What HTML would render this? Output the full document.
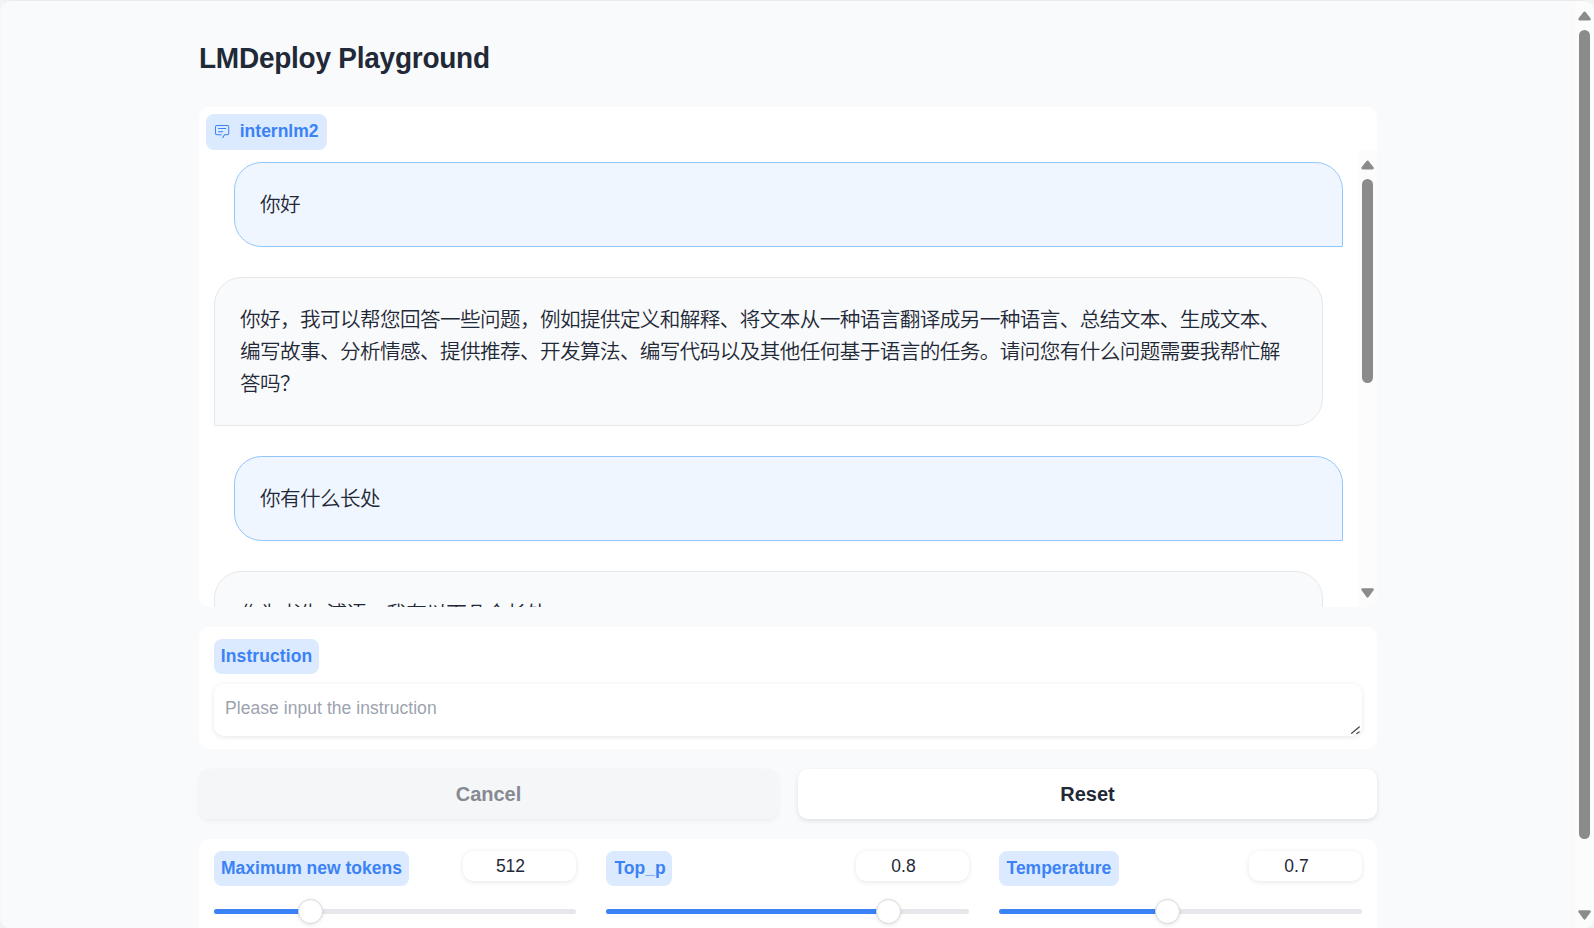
<!DOCTYPE html>
<html lang="zh">
<head>
<meta charset="utf-8">
<title>LMDeploy Playground</title>
<style>
*{box-sizing:border-box;margin:0;padding:0}
html,body{width:1594px;height:928px;overflow:hidden;background:#f3f3f3}
body{font-family:"Liberation Sans","Noto Sans CJK SC",sans-serif;color:#1f2937;position:relative}
#frame{position:absolute;left:0;top:0;width:1594px;height:928px;background:#f9fafb;border-radius:10px;overflow:hidden}
#frame::after{content:"";position:absolute;left:0;top:0;right:0;bottom:0;border-radius:10px;border-top:1px solid #ebebeb;border-left:1px solid #f6f7f8;pointer-events:none}
h1{position:absolute;left:199px;top:41px;font-size:28px;line-height:36px;letter-spacing:-0.25px;transform:scaleY(1.045);transform-origin:0 28px;font-weight:700;color:#1f2937;white-space:nowrap}
.panel{position:absolute;background:#fff;border-radius:10px}
.pill{position:absolute;display:flex;align-items:center;background:#dbeafe;color:#3b82f6;font-weight:700;font-size:17.5px;line-height:24.5px;border-radius:8px;white-space:nowrap;padding:0 7.5px;height:35px}
.pill svg{width:16.25px;height:16.25px;margin-right:10px;flex:none}
.bubble{position:absolute;font-weight:350;font-size:20.6px;letter-spacing:-0.6px;line-height:32px;color:#1f2937;border:1px solid #e5e7eb;background:#f9fafb;border-radius:27.5px;padding:26px 25px 24px}
.bubble.user{background:#eff6ff;border-color:#93c5fd;border-bottom-right-radius:0}
.bubble.bot{border-bottom-left-radius:0}
.sb{position:absolute;background:#fcfcfc}
.sb .thumb{position:absolute;background:#8b8b8b;border-radius:6px}
.sb svg{position:absolute;display:block}
.input{position:absolute;background:#fff;border-radius:10px;box-shadow:0 1px 5px 0 rgba(0,0,0,.1)}
.btn{border:0;padding:0;font-family:inherit;position:absolute;top:769px;height:50px;width:579px;border-radius:10px;background:#fff;box-shadow:0 2px 5px 0 rgba(0,0,0,.1);font-size:20px;font-weight:700;display:flex;align-items:center;justify-content:center;color:#1f2937}
.btn.disabled{background:#f5f6f8;color:#868a91;box-shadow:0 2px 5px 0 rgba(0,0,0,.05)}
.num{position:absolute;top:12px;width:113px;height:30px;border-radius:10px;background:#fff;box-shadow:0 1px 5px 0 rgba(0,0,0,.1);font-size:17.5px;line-height:30px;text-align:center;padding-right:18px;color:#1f2937}
.track{position:absolute;top:70px;height:5px;border-radius:3px;background:#e5e7eb}
.track .fill{position:absolute;left:0;top:0;height:5px;border-radius:3px;background:#3b82f6}
.track .knob{position:absolute;top:-10px;width:25px;height:25px;border-radius:50%;background:#fff;border:1px solid #dadada;box-shadow:0 1px 4px rgba(0,0,0,.1)}
</style>
</head>
<body>
<div id="frame">
<h1>LMDeploy Playground</h1>

<div class="panel" id="chat" style="left:199px;top:107px;width:1178px;height:500px;overflow:hidden">
  <div class="pill" style="left:7px;top:7px;width:120.5px;height:36px;padding-bottom:2px"><svg viewBox="0 0 32 32"><path fill="currentColor" d="M17.74 30L16 29l4-7h6a2 2 0 0 0 2-2V8a2 2 0 0 0-2-2H6a2 2 0 0 0-2 2v12a2 2 0 0 0 2 2h9v2H6a4 4 0 0 1-4-4V8a4 4 0 0 1 4-4h20a4 4 0 0 1 4 4v12a4 4 0 0 1-4 4h-4.84Z"/><path fill="currentColor" d="M8 10h16v2H8zm0 6h10v2H8z"/></svg>internlm2</div>
  <div class="bubble user" style="left:35px;top:55px;width:1109px;height:85px">你好</div>
  <div class="bubble bot" style="left:15px;top:170px;width:1109px;height:149px">你好，我可以帮您回答一些问题，例如提供定义和解释、将文本从一种语言翻译成另一种语言、总结文本、生成文本、编写故事、分析情感、提供推荐、开发算法、编写代码以及其他任何基于语言的任务。请问您有什么问题需要我帮忙解答吗？</div>
  <div class="bubble user" style="left:35px;top:349px;width:1109px;height:85px">你有什么长处</div>
  <div class="bubble bot" style="left:15px;top:464px;width:1109px;height:200px">作为书生·浦语，我有以下几个长处：</div>
  <div class="sb" style="left:1159px;top:43px;width:19px;height:457px">
    <svg style="left:3px;top:10px" width="13" height="10" viewBox="0 0 13 10"><path d="M6.55 1.8 L11.5 8.1 L1.6 8.1 Z" fill="#8b8b8b" stroke="#8b8b8b" stroke-width="2.6" stroke-linejoin="round"/></svg>
    <div class="thumb" style="left:4px;top:29px;width:11px;height:204px"></div>
    <svg style="left:3px;top:438px" width="13" height="10" viewBox="0 0 13 10"><path d="M6.55 8.3 L11.5 1.5 L1.6 1.5 Z" fill="#8b8b8b" stroke="#8b8b8b" stroke-width="2.6" stroke-linejoin="round"/></svg>
  </div>
</div>

<div class="panel" id="instr" style="left:199px;top:627px;width:1178px;height:122px">
  <div class="pill" style="left:15px;top:12px;padding-left:6.8px;letter-spacing:0.1px;width:105px">Instruction</div>
  <div class="input" style="left:15px;top:57px;width:1148px;height:52px;padding:11.5px 12.5px 12.5px 11px;letter-spacing:0.055px;font-size:17.5px;line-height:24.5px;color:#9ca3af">Please input the instruction
    <svg style="position:absolute;right:1px;bottom:1px" width="11" height="11" viewBox="0 0 11 11"><path d="M1.66 9.36 L9.24 2.89 M6.7 9.45 L9.1 7.95" stroke="#4a4a4a" stroke-width="1.3" fill="none" stroke-linecap="round"/></svg>
  </div>
</div>

<button type="button" disabled class="btn disabled" style="left:199px">Cancel</button>
<button type="button" class="btn" style="left:798px">Reset</button>

<div class="panel" id="sliders" style="left:199px;top:839px;width:1178px;height:120px">
  <div class="pill" style="left:15px;top:12px;padding-left:7px;width:195px">Maximum new tokens</div>
  <div class="num" style="left:264px">512</div>
  <div class="track" style="left:15px;width:362px"><div class="fill" style="width:96px"></div><div class="knob" style="left:84px"></div></div>

  <div class="pill" style="left:407px;top:12px;padding-left:8.4px;padding-right:6.6px">Top_p</div>
  <div class="num" style="left:657px">0.8</div>
  <div class="track" style="left:407px;width:363px"><div class="fill" style="width:282px"></div><div class="knob" style="left:270px"></div></div>

  <div class="pill" style="left:800px;top:12px">Temperature</div>
  <div class="num" style="left:1050px">0.7</div>
  <div class="track" style="left:800px;width:363px"><div class="fill" style="width:168px"></div><div class="knob" style="left:156px"></div></div>
</div>

<div class="sb" id="pagesb" style="left:1575px;top:0;width:19px;height:928px">
  <svg style="left:3px;top:11px" width="13" height="10" viewBox="0 0 13 10"><path d="M6.55 1.8 L11.5 8.1 L1.6 8.1 Z" fill="#8b8b8b" stroke="#8b8b8b" stroke-width="2.6" stroke-linejoin="round"/></svg>
  <div class="thumb" style="left:4px;top:30px;width:11px;height:809px"></div>
  <svg style="left:3px;top:910px" width="13" height="10" viewBox="0 0 13 10"><path d="M6.55 8.3 L11.5 1.5 L1.6 1.5 Z" fill="#8b8b8b" stroke="#8b8b8b" stroke-width="2.6" stroke-linejoin="round"/></svg>
</div>

</div>
</body>
</html>
